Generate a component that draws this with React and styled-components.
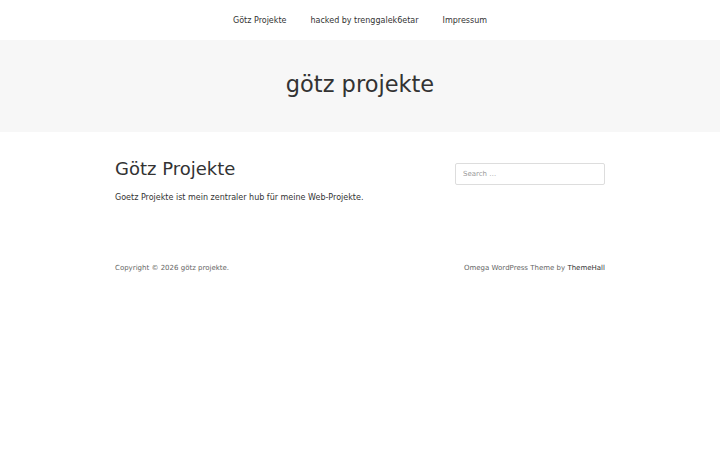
import React from "react";
import styled, { createGlobalStyle } from "styled-components";

const GlobalStyle = createGlobalStyle`
  body {
    margin: 0;
    background: #fff;
    font-family: "DejaVu Sans", sans-serif;
    color: #333;
  }
`;

const Header = styled.header`
  height: 40px;
  display: flex;
  justify-content: center;
  align-items: center;
`;

const Nav = styled.nav`
  display: flex;
  gap: 24px;
`;

const NavLink = styled.a`
  font-size: 8px;
  color: #333;
  text-decoration: none;
`;

const Banner = styled.div`
  height: 92px;
  background: #f7f7f7;
  display: flex;
  justify-content: center;
  align-items: center;
`;

const BannerTitle = styled.h1`
  margin: 0 0 4px;
  font-size: 22.5px;
  font-weight: normal;
  color: #333;
`;

const Container = styled.div`
  width: 490px;
  margin: 0 auto;
`;

const Main = styled(Container)`
  display: flex;
  justify-content: space-between;
  padding-top: 26px;
`;

const Article = styled.article``;

const Title = styled.h2`
  margin: 0;
  font-size: 18px;
  line-height: 22px;
  font-weight: normal;
  color: #333;
`;

const Text = styled.p`
  margin: 13px 0 0;
  font-size: 8px;
  color: #333;
`;

const SearchInput = styled.input`
  box-sizing: border-box;
  width: 150px;
  height: 22px;
  margin-top: 5px;
  border: 1px solid #ddd;
  border-radius: 2px;
  padding: 0 7px;
  font-family: "DejaVu Sans", sans-serif;
  font-size: 7px;
  color: #333;
  &::placeholder {
    color: #999;
  }
`;

const Footer = styled(Container)`
  display: flex;
  justify-content: space-between;
  margin-top: 62px;
  font-size: 7px;
  color: #666;
`;

const FooterLink = styled.a`
  color: #333;
  text-decoration: none;
`;

export default function App() {
  return (
    <>
      <GlobalStyle />
      <Header>
        <Nav>
          <NavLink href="#">Götz Projekte</NavLink>
          <NavLink href="#">hacked by trenggalek6etar</NavLink>
          <NavLink href="#">Impressum</NavLink>
        </Nav>
      </Header>
      <Banner>
        <BannerTitle>götz projekte</BannerTitle>
      </Banner>
      <Main>
        <Article>
          <Title>Götz Projekte</Title>
          <Text>Goetz Projekte ist mein zentraler hub für meine Web-Projekte.</Text>
        </Article>
        <SearchInput type="search" placeholder="Search …" />
      </Main>
      <Footer>
        <span>Copyright © 2026 götz projekte.</span>
        <span>
          Omega WordPress Theme by <FooterLink href="#">ThemeHall</FooterLink>
        </span>
      </Footer>
    </>
  );
}
